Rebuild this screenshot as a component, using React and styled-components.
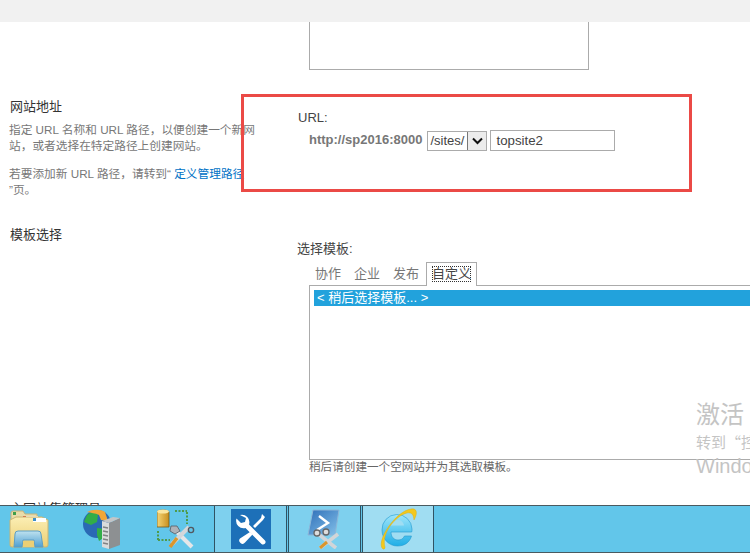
import React from 'react';
import styled, { createGlobalStyle } from 'styled-components';

const Global = createGlobalStyle`
  html, body { margin: 0; padding: 0; background: #fff; }
  body { font-family: "Liberation Sans", "Noto Sans CJK SC", sans-serif; }
`;

const Page = styled.div`
  position: relative;
  width: 750px;
  height: 553px;
  overflow: hidden;
  display: flex;
  flex-direction: column;
`;

const TopBar = styled.div`
  height: 22px;
  flex: none;
  background: #f1f1f1;
`;

const Content = styled.div`
  height: 483px;
  flex: none;
  overflow: hidden;
  display: grid;
  grid-template-columns: 297px 1fr;
  grid-template-rows: 48px 133px 297px 1fr;
`;

const TopBox = styled.div`
  grid-column: 2;
  margin-left: 12px;
  width: 278px;
  height: 47px;
  border: 1px solid #ababab;
  border-top: 0;
`;

const LeftCol = styled.div`
  padding: ${(p) => p.$top}px 0 0 9px;
`;

const Heading = styled.div`
  font-size: 13px;
  line-height: 17px;
  color: #333;
  padding-left: 1px;
`;

const Desc = styled.div`
  margin-top: 7px;
  width: 248px;
  font-size: 11.7px;
  line-height: 16px;
  color: #777;
`;

const DescGap = styled.div`
  height: 12px;
`;

const Link = styled.a`
  color: #0072c6;
`;

const RightCol = styled.div`
  padding: 39px 0 0 1px;
`;

const UrlLabel = styled.div`
  font-size: 13px;
  line-height: 17px;
  color: #444;
`;

const UrlRow = styled.div`
  display: flex;
  align-items: center;
  margin: 4px 0 0 11px;
`;

const Host = styled.span`
  font-size: 13px;
  font-weight: bold;
  color: #777;
  margin-right: 5px;
  padding-bottom: 3px;
`;

const SelectBox = styled.div`
  display: flex;
  align-items: stretch;
  width: 58px;
  height: 18px;
  border: 1px solid #ababab;
  font-size: 13px;
  line-height: 18px;
  color: #444;
`;

const SelectText = styled.span`
  flex: 1;
  padding-left: 2px;
`;

const SelectButton = styled.span`
  width: 18px;
  background: #ececec;
  border-left: 1px solid #777;
  display: flex;
  align-items: center;
  justify-content: center;
`;

const TextInput = styled.div`
  margin-left: 3px;
  width: 118px;
  height: 19px;
  border: 1px solid #ababab;
  padding-left: 5px;
  font-size: 13.3px;
  line-height: 19px;
  color: #444;
`;

const TemplateCol = styled.div`
  padding-top: 37px;
`;

const TemplateLabel = styled.div`
  font-size: 13px;
  line-height: 17px;
  color: #444;
`;

const Tabs = styled.div`
  display: flex;
  margin: 4px 0 0 12px;
  padding-left: 6px;
  height: 24px;
  align-items: flex-end;
`;

const Tab = styled.div`
  font-size: 13px;
  line-height: 17px;
  color: #777;
  padding: 0 0 3px;
  margin-right: 13px;
`;

const ActiveTab = styled.div`
  margin: 0 0 -1px -6px;
  height: 24px;
  box-sizing: border-box;
  background: #fff;
  border: 1px solid #ababab;
  border-bottom: 0;
  padding: 3px 5px 0;
  font-size: 13px;
  line-height: 16px;
  color: #444;
  z-index: 1;
`;

const FocusText = styled.span`
  display: inline-block;
  outline: 1px dotted #333;
  outline-offset: -1px;
`;

const ListBox = styled.div`
  margin-left: 12px;
  height: 169px;
  border: 1px solid #ababab;
  border-right: 0;
  padding: 4px 0 0 4px;
`;

const ListItem = styled.div`
  height: 16px;
  background: #22a2dc;
  color: #fff;
  font-size: 13px;
  line-height: 16px;
  padding-left: 3px;
`;

const Hint = styled.div`
  margin: 0 0 0 12px;
  font-size: 11.6px;
  line-height: 14px;
  color: #666;
`;

const Taskbar = styled.div`
  height: 48px;
  flex: none;
  box-sizing: border-box;
  background: #62c6ea;
  border-top: 1px solid #4a5a60;
  border-bottom: 1px solid #4a5a60;
  display: flex;
`;

const PinnedItem = styled.div`
  width: ${(p) => p.$w}px;
  flex: none;
  box-sizing: border-box;
  padding-left: 9px;
  display: flex;
  align-items: center;
`;

const RunningItem = styled.div`
  width: ${(p) => p.$w}px;
  flex: none;
  box-sizing: border-box;
  margin-left: ${(p) => p.$gap || 0}px;
  display: flex;
  align-items: center;
  justify-content: center;
  border-left: 1px solid #2f5364;
  border-right: 1px solid #2f5364;
  background: ${(p) => (p.$active ? '#a0ddf2' : '#7ed0ee')};
`;

const Marker = styled.div`
  position: absolute;
  left: 241px;
  top: 94px;
  width: 451px;
  height: 98px;
  box-sizing: border-box;
  border: 3px solid #eb4a46;
  pointer-events: none;
`;

const Watermark = styled.div`
  position: absolute;
  left: 696px;
  top: 400px;
  width: 54px;
  overflow: hidden;
  white-space: nowrap;
  color: #c4c4c4;
`;

const WatermarkTitle = styled.div`
  font-size: 24px;
  line-height: 30px;
`;

const WatermarkText = styled.div`
  font-family: "Noto Sans CJK SC", sans-serif;
  font-size: 15px;
  line-height: 24px;
`;

const WatermarkLatin = styled.div`
  font-size: 20px;
  line-height: 24px;
`;

const FolderIcon = () => (
  <svg width="40" height="38" viewBox="0 0 40 38">
    <defs>
      <linearGradient id="fold" x1="0" y1="0" x2="0" y2="1">
        <stop offset="0" stopColor="#fbeeb4" />
        <stop offset="1" stopColor="#eccf74" />
      </linearGradient>
      <linearGradient id="glass" x1="0" y1="0" x2="0" y2="1">
        <stop offset="0" stopColor="#bfe2ef" />
        <stop offset="1" stopColor="#4e9fd2" />
      </linearGradient>
    </defs>
    <path d="M2 3a2 2 0 0 1 2-2h10l2 3h12v6H2z" fill="#e9dca9" stroke="#c4b27a" />
    <rect x="4" y="2" width="3" height="3" fill="#3f9e4a" />
    <rect x="15" y="6" width="14" height="4" fill="#fff" />
    <rect x="14" y="6" width="3" height="3" fill="#d9412f" />
    <path d="M1 10l6-3h26l6 3v25a2 2 0 0 1-2 2H3a2 2 0 0 1-2-2z" fill="url(#fold)" stroke="#c9b475" />
    <rect x="24" y="8" width="13" height="4" fill="#fff" />
    <rect x="24" y="8" width="3" height="3" fill="#3d8ec9" />
    <path d="M5 37l1-13a3 3 0 0 1 3-3h20a3 3 0 0 1 3 3l2 13h-8l-1-7H14l-1 7z" fill="url(#glass)" stroke="#5f9fc4" />
    <rect x="14" y="31" width="11" height="6" fill="#eccf74" />
  </svg>
);

const ServerIcon = () => (
  <svg width="38" height="40" viewBox="0 0 38 40">
    <circle cx="14" cy="15" r="14" fill="#2a69b4" />
    <path d="M4 6c4-3 8-4 11 0l-1 7-6 3-7-3zM14 19l8 1 1 7-7 5-2-6z" fill="#32ad48" />
    <path d="M4 3c6-3 14-3 18 0l3 9-7-1-2-5C12 4 8 4 4 3z" fill="#f0a638" />
    <path d="M19 12l7 2v26l-7-2z" fill="#d9dbdc" />
    <path d="M26 14l11-5v27l-11 4z" fill="#8d9092" />
    <path d="M19 12l11-4 7 1-11 5z" fill="#c3c5c7" />
    <path d="M20 18l5 1M20 22l5 1M20 26l5 1M20 30l5 1M20 34l5 1" stroke="#808284" strokeWidth="1.5" />
  </svg>
);

const DbToolIcon = () => (
  <svg width="40" height="41" viewBox="0 0 40 41">
    <defs>
      <linearGradient id="drum" x1="0" y1="0" x2="1" y2="0">
        <stop offset="0" stopColor="#f4d576" />
        <stop offset="1" stopColor="#c88f1e" />
      </linearGradient>
    </defs>
    <path d="M0 3a6 2 0 0 1 12 0v15H0z" fill="url(#drum)" stroke="#75591a" strokeWidth="0.8" />
    <ellipse cx="6" cy="2.5" rx="6" ry="2" fill="#f9e6a0" />
    <path d="M18 2h12M30 3v12M1 22v10M1 31h12" stroke="#4f9a4a" strokeWidth="2" strokeDasharray="2 1.5" fill="none" />
    <path d="M16 19l19 19" stroke="#e4e6e8" strokeWidth="4" />
    <path d="M32 18L15 35" stroke="#d4d7da" strokeWidth="4" />
    <path d="M20 29l-7 9" stroke="#d9962c" strokeWidth="3.5" />
    <path d="M14 17l6 0 3 5-5 3-5-3z" fill="#aeb2b8" stroke="#555c64" strokeWidth="0.8" />
    <circle cx="34" cy="21" r="2.6" fill="none" stroke="#525860" strokeWidth="1.4" />
  </svg>
);

const AdminToolIcon = () => (
  <svg width="40" height="40" viewBox="0 0 40 40">
    <rect width="40" height="40" fill="#1d70b8" />
    <path d="M9 6a7.5 7.5 0 0 1 9 9.5l16 16a2.5 2.5 0 0 1-3.5 3.5l-16-16a7.5 7.5 0 0 1-9-9.5l4.5 4.5 4-1 1-4z" fill="#fff" />
    <path d="M31 5l3 3-2 3-8 8-2-2 8-8zM19 23l2.5 2.5-7.5 8a3 3 0 0 1-5-4z" fill="#fff" />
  </svg>
);

const ShellToolIcon = () => (
  <svg width="36" height="40" viewBox="0 0 36 40">
    <defs>
      <linearGradient id="shell" x1="0" y1="0" x2="1" y2="1">
        <stop offset="0" stopColor="#2f6fb8" />
        <stop offset="1" stopColor="#84c1ea" />
      </linearGradient>
    </defs>
    <path d="M6 1h26l-4 25H1z" fill="url(#shell)" stroke="#8db6d8" />
    <path d="M12 7l9 7-11 7" fill="none" stroke="#fff" strokeWidth="2.4" />
    <path d="M10 24l19 15M31 25L13 39" stroke="#d2d5d8" strokeWidth="3.6" />
    <circle cx="10" cy="24" r="3" fill="#ddd" stroke="#666" strokeWidth="1.3" />
    <circle cx="19" cy="23" r="3" fill="#ddd" stroke="#666" strokeWidth="1.3" />
    <path d="M13 39l7-6" stroke="#d9962c" strokeWidth="3" />
  </svg>
);

const IeIcon = () => (
  <svg width="40" height="42" viewBox="0 0 40 42">
    <defs>
      <linearGradient id="ie" x1="0" y1="0" x2="0" y2="1">
        <stop offset="0" stopColor="#9fe6fb" />
        <stop offset="1" stopColor="#1faee6" />
      </linearGradient>
    </defs>
    <path d="M4 22a15 15 0 0 1 30-1c0 1 0 2-.3 3H13c0 5 3 8 7 8 3 0 5-1 6.5-4h7c-2 7-7.5 10-14 10C11 38 4 31 4 22z" fill="url(#ie)" stroke="#2398cf" strokeWidth="0.6" />
    <path d="M13 17.5h13c-.5-3.500-3-5.500-6.500-5.500s-6 2-6.500 5.500z" fill="#a0ddf2" />
    <path d="M5 41C-3 35 17 3 33 1c6-1 7 4 3 11-.5-5-2-8-7-7C17 8 3 26 7 39c.3 1.500-1 2.500-2 2z" fill="#f3c81d" stroke="#d7a90f" strokeWidth="0.4" />
  </svg>
);

export default function App() {
  return (
    <Page>
      <Global />
      <TopBar />
      <Content>
        <div />
        <TopBox />
        <LeftCol $top={28}>
          <Heading>网站地址</Heading>
          <Desc>
            指定 URL 名称和 URL 路径，以便创建一个新网站，或者选择在特定路径上创建网站。
            <DescGap />
            若要添加新 URL 路径，请转到“ <Link>定义管理路径</Link> ”页。
          </Desc>
        </LeftCol>
        <RightCol>
          <UrlLabel>URL:</UrlLabel>
          <UrlRow>
            <Host>http://sp2016:8000</Host>
            <SelectBox>
              <SelectText>/sites/</SelectText>
              <SelectButton>
                <svg width="11" height="8" viewBox="0 0 11 8">
                  <path d="M1 1.500l4.500 4.500L10 1.500" fill="none" stroke="#111" strokeWidth="2" />
                </svg>
              </SelectButton>
            </SelectBox>
            <TextInput>topsite2</TextInput>
          </UrlRow>
        </RightCol>
        <LeftCol $top={23}>
          <Heading>模板选择</Heading>
        </LeftCol>
        <TemplateCol>
          <TemplateLabel>选择模板:</TemplateLabel>
          <Tabs>
            <Tab>协作</Tab>
            <Tab>企业</Tab>
            <Tab>发布</Tab>
            <ActiveTab><FocusText>自定义</FocusText></ActiveTab>
          </Tabs>
          <ListBox>
            <ListItem>&lt; 稍后选择模板... &gt;</ListItem>
          </ListBox>
          <Hint>稍后请创建一个空网站并为其选取模板。</Hint>
        </TemplateCol>
        <LeftCol $top={0}>
          <Heading>主网站集管理员</Heading>
        </LeftCol>
      </Content>
      <Taskbar>
        <PinnedItem $w={74}><FolderIcon /></PinnedItem>
        <PinnedItem $w={74}><ServerIcon /></PinnedItem>
        <PinnedItem $w={66}><DbToolIcon /></PinnedItem>
        <RunningItem $w={73}><AdminToolIcon /></RunningItem>
        <RunningItem $w={73} $gap={1}><ShellToolIcon /></RunningItem>
        <RunningItem $w={72} $gap={1} $active><IeIcon /></RunningItem>
      </Taskbar>
      <Marker />
      <Watermark>
        <WatermarkTitle>激活</WatermarkTitle>
        <WatermarkText>转到“控制面板”</WatermarkText>
        <WatermarkLatin>Windows</WatermarkLatin>
      </Watermark>
    </Page>
  );
}
